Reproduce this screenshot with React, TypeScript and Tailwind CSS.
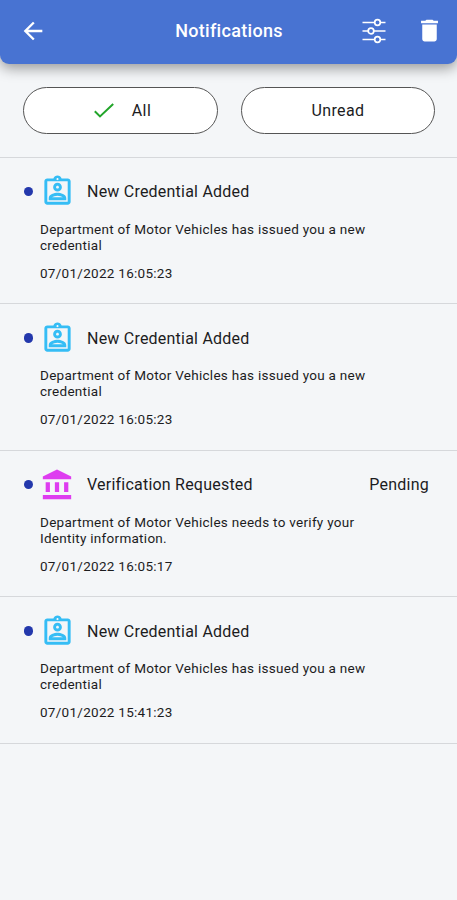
import { MdAccountBalance, MdArrowBack, MdDelete, MdOutlineAssignmentInd } from "react-icons/md";

const notifications = [
  {
    id: "1",
    type: "credential",
    title: "New Credential Added",
    message: "Department of Motor Vehicles has issued you a new credential",
    date: "07/01/2022 16:05:23",
  },
  {
    id: "2",
    type: "credential",
    title: "New Credential Added",
    message: "Department of Motor Vehicles has issued you a new credential",
    date: "07/01/2022 16:05:23",
  },
  {
    id: "3",
    type: "verification",
    title: "Verification Requested",
    message: "Department of Motor Vehicles needs to verify your Identity information.",
    date: "07/01/2022 16:05:17",
    status: "Pending",
  },
  {
    id: "4",
    type: "credential",
    title: "New Credential Added",
    message: "Department of Motor Vehicles has issued you a new credential",
    date: "07/01/2022 15:41:23",
  },
];

function FilterIcon() {
  return (
    <svg width="24" height="26" viewBox="0 0 24 26" fill="none" stroke="currentColor" strokeWidth="1.7">
      <path d="M0.5 4.5h12M18.5 4.5h5M0.5 13h5.5M12 13h11.5M0.5 21.5h12M18.5 21.5h5" />
      <circle cx="15.5" cy="4.5" r="2.8" />
      <circle cx="9" cy="13" r="2.8" />
      <circle cx="15.5" cy="21.5" r="2.8" />
    </svg>
  );
}

export default function App() {
  return (
    <div className="min-h-[900px] bg-[#f4f6f8] font-['Roboto',sans-serif] text-[#1c1c1e]">
      <header className="grid h-[63.5px] grid-cols-[1fr_auto_1fr] items-center rounded-b-[9px] bg-[#4873d2] px-[19px] pb-[2px] text-white shadow-[0_4px_14px_rgba(0,0,0,0.4)]">
        <button aria-label="Back" className="justify-self-start">
          <MdArrowBack size={28} />
        </button>
        <h1 className="pl-px text-[18px] font-medium tracking-[0.3px]">Notifications</h1>
        <div className="-mr-[6px] flex items-center gap-[29px] justify-self-end">
          <button aria-label="Filter">
            <FilterIcon />
          </button>
          <button aria-label="Delete">
            <MdDelete size={29} />
          </button>
        </div>
      </header>

      <div className="flex justify-between border-b-[1.5px] border-[#d6d8db] pt-[23px] pr-[22px] pb-[23px] pl-[23px]">
        <button className="flex h-[47px] w-[195px] items-center justify-center gap-[18px] rounded-full border border-[#555] bg-white pt-px pl-[4px] text-[16px] tracking-[0.4px]">
          <svg width="20" height="15" viewBox="0 0 20 15" fill="none" stroke="#22a52a" strokeWidth="2">
            <path d="M0.8 8.2l5.2 5.2L19.2 0.9" />
          </svg>
          All
        </button>
        <button className="h-[47px] w-[194px] rounded-full border border-[#555] bg-white pt-px text-[16px] tracking-[0.4px]">
          Unread
        </button>
      </div>

      <ul>
        {notifications.map((item) => (
          <li key={item.id} className="h-[146.5px] border-b-[1.5px] border-[#d6d8db] pt-[16px] pr-[28px] pl-[23.5px]">
            <div className="flex h-[36px] items-center">
              <span className="mr-[7px] size-[9.5px] rounded-full bg-[#2338ac]" />
              <span className="w-[35px]">
                {item.type === "credential" ? (
                  <MdOutlineAssignmentInd size={35} className="text-[#35bdf5]" />
                ) : (
                  <MdAccountBalance size={34} className="text-[#de3cf0]" />
                )}
              </span>
              <h2 className="ml-[12px] flex-1 pt-[1.5px] text-[16px] tracking-[0.22px]">{item.title}</h2>
              {item.status && <span className="pt-[1.5px] text-[16px] tracking-[0.25px]">{item.status}</span>}
            </div>
            <div className="pt-[11px] pl-[16.5px] text-[13.5px] leading-[16px] tracking-[0.28px]">
              <p className="w-[335px]">{item.message}</p>
              <p className="mt-[12px]">{item.date}</p>
            </div>
          </li>
        ))}
      </ul>
    </div>
  );
}
